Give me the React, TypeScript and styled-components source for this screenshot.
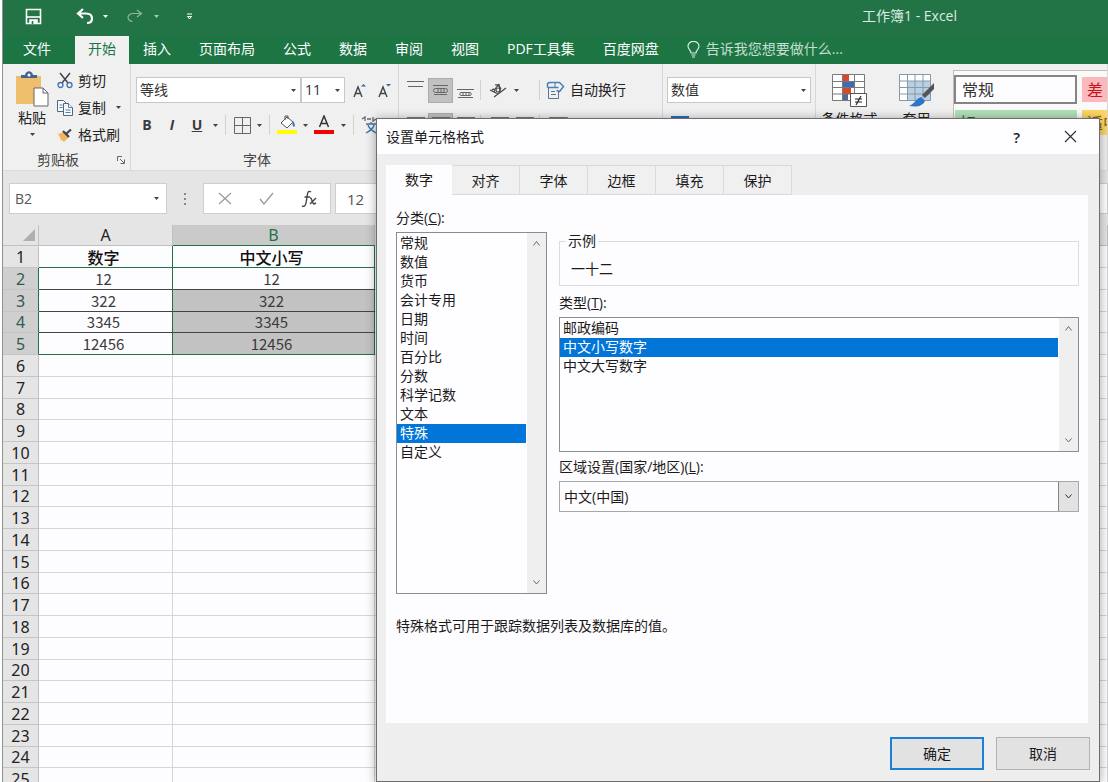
import React from "react";
import styled, { createGlobalStyle, css } from "styled-components";

const GlobalStyle = createGlobalStyle`
  * { box-sizing: border-box; }
  html, body { margin: 0; height: 100%; }
  body {
    overflow: hidden;
    background: #fff;
    font-family: "Open Sans", "Noto Sans CJK SC", sans-serif;
    font-size: 14px;
    line-height: 20px;
    color: #222;
  }
  button, input, select { font: inherit; color: inherit; margin: 0; padding: 0; border: 0; background: none; border-radius: 0; }
  svg { display: block; flex: none; }
`;

/* ---------- window frame ---------- */

const Desktop = styled.div`
  position: relative;
  height: 100vh;
  padding-left: 2px;
  overflow: hidden;
`;
const Workbook = styled.main`
  display: flex;
  flex-direction: column;
  height: 100%;
  border-left: 1px solid #8f9390;
  background: #e6e5e6;
  overflow: hidden;
`;
const TitleBar = styled.header`
  display: flex;
  flex: none;
  align-items: center;
  height: 36px;
  padding: 0 151px 4px 22px;
  background: #227346;
  color: #fff;
`;
const QuickButton = styled.button<{ $gap?: number; $dim?: boolean }>`
  margin-right: ${(p) => p.$gap ?? 0}px;
  opacity: ${(p) => (p.$dim ? 0.6 : 1)};
`;
const DocTitle = styled.h1`
  margin: 0 0 0 auto;
  font-size: 14px;
  line-height: 20px;
  font-weight: 400;
  color: #dcebe2;
`;
const TabBar = styled.nav`
  display: flex;
  flex: none;
  height: 28px;
  background: #1d7544;
  color: #fff;
`;
const RibbonTab = styled.button<{ $active?: boolean; $file?: boolean }>`
  flex: none;
  padding: ${(p) => (p.$file ? "0 24px 2px 20px" : p.$active ? "0 13px 2px" : "0 14px 2px")};
  ${(p) =>
    p.$active &&
    css`
      background: #f2f1f2;
      color: #1d7544;
    `}
`;
const TellMe = styled.label`
  display: flex;
  align-items: center;
  gap: 6px;
  margin-left: 14px;
  padding-bottom: 2px;
  input { width: 160px; }
  input::placeholder { color: #c5dfd0; opacity: 1; }
`;

/* ---------- ribbon ---------- */

const Ribbon = styled.section`
  display: flex;
  flex: none;
  height: 107px;
  background: #f1f0f1;
  border-bottom: 1px solid #dbdadb;
  overflow: hidden;
`;
const Group = styled.div<{ $width?: number; $pad?: string }>`
  display: flex;
  flex-direction: column;
  flex: ${(p) => (p.$width ? "none" : "1")};
  width: ${(p) => (p.$width ? `${p.$width}px` : "auto")};
  padding: ${(p) => p.$pad ?? "13px 0 0 5px"};
  border-right: 1px solid #d8d7d8;
  overflow: hidden;
`;
const GroupName = styled.div`
  display: flex;
  justify-content: center;
  margin-top: auto;
  height: 20px;
  padding-right: 20px;
  color: #444;
`;
const LauncherName = styled(GroupName)`
  justify-content: space-between;
  align-items: center;
  padding: 0 5px 0 34px;
`;
const Line = styled.div<{ $height?: number; $top?: number }>`
  display: flex;
  align-items: center;
  flex: none;
  height: ${(p) => p.$height ?? 26}px;
  margin-top: ${(p) => p.$top ?? 0}px;
`;
const Clipboard = styled.div`
  display: flex;
  gap: 8px;
  padding-left: 12px;
`;
const PasteButton = styled.button`
  display: flex;
  flex-direction: column;
  align-items: center;
  flex: none;
  width: 34px;
  margin-top: 7px;
  > span { margin-bottom: 5px; }
`;
const CommandList = styled.div`
  display: flex;
  flex-direction: column;
  padding-top: 3px;
`;
const Command = styled.button<{ $tail?: boolean }>`
  display: flex;
  align-items: center;
  gap: 5px;
  height: 27px;
  white-space: nowrap;
  svg + svg, span + svg { margin-left: 5px; }
`;
const Tool = styled.button<{ $width?: number; $on?: boolean; $letter?: "b" | "i" | "u" }>`
  display: flex;
  align-items: center;
  justify-content: center;
  flex: none;
  width: ${(p) => p.$width ?? 25}px;
  height: 25px;
  background: ${(p) => (p.$on ? "#c2c1c2" : "none")};
  border: ${(p) => (p.$on ? "1px solid #adacad" : "0")};
  color: #3c3b3c;
  font-weight: ${(p) => (p.$letter ? 700 : 400)};
  font-style: ${(p) => (p.$letter === "i" ? "italic" : "normal")};
  text-decoration: ${(p) => (p.$letter === "u" ? "underline" : "none")};
`;
const Rule = styled.span<{ $left?: number; $right?: number }>`
  width: 1px;
  height: 20px;
  margin: 0 ${(p) => p.$right ?? 4}px 0 ${(p) => p.$left ?? 4}px;
  background: #d3d2d3;
`;
const ComboFrame = styled.span<{ $width: number }>`
  display: grid;
  align-items: center;
  flex: none;
  width: ${(p) => p.$width}px;
  height: 26px;
  border: 1px solid #c9c8c9;
  background: #fff;
  > * { grid-area: 1 / 1; }
  > select { appearance: none; width: 100%; height: 24px; padding-left: 3px; outline: 0; color: #333; }
  > svg { justify-self: end; margin-right: 4px; pointer-events: none; }
`;
const BigCommand = styled.button`
  display: flex;
  flex-direction: column;
  align-items: center;
  width: 67px;
  line-height: 20px;
`;
const StyleRow = styled.div`
  display: flex;
  align-items: flex-start;
`;
const Gallery = styled.div`
  display: grid;
  grid-template-columns: 123px 1fr;
  gap: 4px;
  flex: 1;
  margin-left: 3px;
  padding-top: 4px;
  background: #fbfafb;
  border: 1px solid #c9b9b9;
  border-width: 1px 0 0 1px;
`;
const Swatch = styled.button<{ $bg: string; $ink: string; $framed?: boolean }>`
  height: ${(p) => (p.$framed ? 29 : 25)}px;
  margin: ${(p) => (p.$framed ? "0" : "2px 0 0 1px")};
  padding-left: ${(p) => (p.$framed ? 6 : 5)}px;
  text-align: left;
  font-size: 16px;
  white-space: nowrap;
  overflow: hidden;
  background: ${(p) => p.$bg};
  color: ${(p) => p.$ink};
  border: ${(p) => (p.$framed ? "2px solid #858485" : "0")};
`;

/* ---------- formula bar ---------- */

const FormulaBar = styled.section`
  display: flex;
  flex: none;
  align-items: center;
  height: 54px;
  padding: 1px 0 0 6px;
  color: #555;
`;
const NameBox = styled.label`
  display: flex;
  align-items: center;
  width: 158px;
  height: 31px;
  padding: 0 7px 0 5px;
  border: 1px solid #cfcecf;
  background: #fff;
  input { flex: 1; min-width: 0; }
`;
const FormulaTools = styled.div`
  display: flex;
  align-items: center;
  justify-content: space-around;
  width: 128px;
  height: 31px;
  margin-right: 4px;
  border: 1px solid #cfcecf;
  background: #fff;
`;
const FormulaInput = styled.input`
  && {
    flex: 1;
    height: 31px;
    padding-left: 11px;
    border: 1px solid #cfcecf;
    background: #fff;
    font-size: 15px;
  }
`;
const Dots = styled.span`
  width: 36px;
  display: flex;
  justify-content: center;
`;

/* ---------- sheet ---------- */

const Sheet = styled.table`
  flex: none;
  width: 100%;
  table-layout: fixed;
  border-collapse: separate;
  border-spacing: 0;
  background: #fdfcfe;
  th, td { padding: 0; overflow: hidden; }
`;
const HeadCell = styled.th<{ $width?: number; $active?: boolean }>`
  width: ${(p) => (p.$width ? `${p.$width}px` : "auto")};
  height: 21px;
  font: 400 16px/20px "Noto Sans", sans-serif;
  background: ${(p) => (p.$active ? "#cbcacb" : "#e6e5e6")};
  color: ${(p) => (p.$active ? "#217346" : "#222")};
  border-right: 1px solid #c2c1c2;
  border-bottom: 1px solid ${(p) => (p.$active ? "#217346" : "#c2c1c2")};
  svg { margin: 0 3px 0 auto; }
`;
const SheetRow = styled.tr`
  height: 22px;
  &:nth-child(4n) { height: 21px; }
`;
const RowHead = styled.th<{ $picked?: boolean }>`
  font: 400 16px/20px "Noto Sans", sans-serif;
  background: ${(p) => (p.$picked ? "#d0cfd0" : "#e6e5e6")};
  color: ${(p) => (p.$picked ? "#2f5a4c" : "#222")};
  border-right: 1px solid ${(p) => (p.$picked ? "#217346" : "#c2c1c2")};
  border-bottom: 1px solid #c6c5c6;
`;
const Cell = styled.td<{ $right?: string; $bottom?: string; $shade?: boolean; $bold?: boolean }>`
  height: 21px;
  padding-right: 4px !important;
  text-align: center;
  font: ${(p) => (p.$bold ? "500 16px/20px" : "400 15px/20px")} "Noto Sans CJK SC", sans-serif;
  color: ${(p) => (p.$bold ? "#111" : "#3c3b3c")};
  background: ${(p) => (p.$shade ? "#c3c2c3" : "transparent")};
  border-right: 1px solid ${(p) => p.$right ?? "#d4d6d8"};
  border-bottom: 1px solid ${(p) => p.$bottom ?? "#d4d6d8"};
`;

/* ---------- dialog ---------- */

const Dialog = styled.section`
  position: absolute;
  top: 118px;
  right: 8px;
  bottom: 0;
  left: 376px;
  display: flex;
  flex-direction: column;
  background: #efeeef;
  border: 1px solid #6f6e6f;
  box-shadow: 0 1px 10px rgba(0, 0, 0, 0.35);
  color: #1b1b1b;
`;
const DialogHead = styled.header`
  display: flex;
  align-items: center;
  height: 35px;
  padding: 0 22px 0 9px;
  background: #fefdff;
  h2 { flex: 1; margin: 0; font-size: 14px; line-height: 20px; font-weight: 400; }
  button { font-size: 15px; font-weight: 600; }
  button + button { margin-left: 44px; }
`;
const DialogTabs = styled.div`
  display: flex;
  height: 30px;
  margin: 11px 0 0 9px;
`;
const DialogTab = styled.button<{ $active?: boolean }>`
  width: ${(p) => (p.$active ? 66 : 68)}px;
  ${(p) =>
    p.$active
      ? css`
          background: #fdfcfe;
        `
      : css`
          border: 1px solid #dad9da;
          border-left: 0;
          background: #f1f0f1;
          padding-top: 2px;
        `}
`;
const Panel = styled.div`
  flex: 1;
  min-height: 0;
  margin: 0 11px 0 9px;
  padding: 13px 9px 0 10px;
  background: #fdfcfe;
`;
const Columns = styled.div`
  display: grid;
  grid-template-columns: 151px 1fr;
  column-gap: 12px;
`;
const Column = styled.div`
  display: flex;
  flex-direction: column;
`;
const FieldName = styled.label<{ $top?: number; $bottom?: number }>`
  display: block;
  margin: ${(p) => p.$top ?? 0}px 0 ${(p) => p.$bottom ?? 4}px;
`;
const ListFrame = styled.div<{ $height: number }>`
  display: flex;
  height: ${(p) => p.$height}px;
  border: 1px solid #8a8c90;
  background: #fefdff;
`;
const Options = styled.ul`
  flex: 1;
  margin: 0;
  padding: 1px 1px 0 0;
  list-style: none;
`;
const Option = styled.li<{ $on?: boolean }>`
  height: 19px;
  padding-left: 3px;
  line-height: 18px;
  background: ${(p) => (p.$on ? "#0275d8" : "none")};
  color: ${(p) => (p.$on ? "#fff" : "inherit")};
`;
const ScrollTrack = styled.div`
  display: flex;
  flex-direction: column;
  justify-content: space-between;
  align-items: center;
  width: 19px;
  padding: 7px 0;
  background: #f0eff0;
`;
const Sample = styled.fieldset`
  height: 54px;
  margin: 24px 0 0;
  padding: 9px 11px 0;
  border: 1px solid #dddcdd;
  legend { margin-left: -5px; padding: 0 2px; line-height: 18px; }
`;
const LocaleFrame = styled.div`
  display: grid;
  height: 31px;
  border: 1px solid #a9a8a9;
  > * { grid-area: 1 / 1; }
  select { appearance: none; width: 100%; padding-left: 4px; }
`;
const DropArrow = styled.span`
  display: flex;
  align-items: center;
  justify-content: center;
  justify-self: end;
  width: 20px;
  border-left: 1px solid #858485;
  background: #e3e2e3;
  pointer-events: none;
`;
const Hint = styled.p`
  margin: 22px 0 0;
`;
const Actions = styled.footer`
  display: flex;
  justify-content: flex-end;
  gap: 12px;
  padding: 14px 9px 11px;
`;
const ActionButton = styled.button<{ $primary?: boolean }>`
  width: 94px;
  height: 33px;
  background: #e3e2e3;
  border: ${(p) => (p.$primary ? "2px solid #1e7fd6" : "1px solid #b3b2b3")};
`;

/* ---------- icons ---------- */

const Caret = ({ color = "#444" }: { color?: string }) => (
  <svg width="5" height="3" viewBox="0 0 5 3" fill={color}><path d="M0 0h5L2.500 3z" /></svg>
);
const Chevron = ({ up, color = "#6a696a" }: { up?: boolean; color?: string }) => (
  <svg width="9" height="7" viewBox="0 0 9 7" fill="none" stroke={color}>
    <path d={up ? "M1.500 5.500l3-4 3 4" : "M1.500 1.500l3 3.500 3-3.500"} />
  </svg>
);
const SaveIcon = () => (
  <svg width="17" height="17" viewBox="0 0 17 17" fill="none" stroke="#fff" strokeWidth="1.600">
    <path d="M1.500 1.500h14v14h-14z" /><path d="M2 9h13" /><path d="M5 16v-4h7v4" fill="#fff" /><path d="M7.500 13v3" stroke="#227346" />
  </svg>
);
const UndoIcon = () => (
  <svg width="18" height="17" viewBox="0 0 18 17" fill="none" stroke="#fff" strokeWidth="2.200">
    <path d="M7 1L2 5.500 7 10M2 5.500h8c4 0 6 2 6 5s-2 4.500-5 4.500" />
  </svg>
);
const RedoIcon = () => (
  <svg width="16" height="14" viewBox="0 0 16 14" fill="none" stroke="#d5e6dc" strokeWidth="1.200">
    <path d="M10 1l4.500 3.500L10 8M14 4.500H6c-3 0-5 2-5 4s2 4 4.500 4" />
  </svg>
);
const CustomizeIcon = () => (
  <svg width="5" height="7" viewBox="0 0 5 7" fill="none" stroke="#fff"><path d="M0 1h5M.5 3.500h4l-2 2.500z" /></svg>
);
const BulbIcon = () => (
  <svg width="13" height="17" viewBox="0 0 13 17" fill="none" stroke="#dcebe2" strokeWidth="1.200">
    <path d="M4 12c0-3-3-3.500-3-7a5.300 4.500 0 0 1 11 0c0 3.500-3 4-3 7zM4.500 14h4M5 16h3" />
  </svg>
);
const PasteIcon = () => (
  <svg width="34" height="37" viewBox="0 0 34 37">
    <path d="M1 5h25v28H1z" fill="#efbe6d" />
    <path d="M6 7V4h4c1-5 7-5 8 0h4v3z" fill="#41658f" /><circle cx="14" cy="4" r="1.500" fill="#fff" />
    <path d="M19 17h9l5 5v13H19z" fill="#fff" stroke="#686768" /><path d="M28 17v5h5" fill="none" stroke="#686768" />
  </svg>
);
const CutIcon = () => (
  <svg width="16" height="17" viewBox="0 0 16 17" fill="none">
    <path d="M3 1l8 10M13 1L5 11" stroke="#444" strokeWidth="1.500" />
    <circle cx="3.500" cy="13" r="2.500" stroke="#3f74ad" strokeWidth="1.300" /><circle cx="12.500" cy="13" r="2.500" stroke="#3f74ad" strokeWidth="1.300" />
  </svg>
);
const CopyIcon = () => (
  <svg width="16" height="17" viewBox="0 0 16 17" fill="#fbfafb" stroke="#56677c">
    <path d="M.5 1.500h6l3 3v8h-9z" /><path d="M6.500 4.500h5l4 4v8h-9z" /><path d="M11.500 4.500v4h4M2.500 6h3M2.500 8.500h3M8.500 11h5M8.500 13.500h5" stroke="#4a7fb8" />
  </svg>
);
const BrushIcon = () => (
  <svg width="16" height="14" viewBox="0 0 16 14">
    <path d="M1 6l6-2 5 5-5 5-2-2-1 .5-1-3z" fill="#efb75e" /><path d="M6 3l6 6" stroke="#444" strokeWidth="2.200" fill="none" /><path d="M9 6l5-4.500" stroke="#444" strokeWidth="2.200" />
  </svg>
);
const LauncherIcon = () => (
  <svg width="8" height="8" viewBox="0 0 8 8" fill="none" stroke="#666"><path d="M.5 5V.5H5M3 3l4 4M7.500 3.500v4h-4" /></svg>
);
const FontSizeIcon = ({ down }: { down?: boolean }) => (
  <svg width="13" height="15" viewBox="0 0 13 15" fill="none">
    <path d="M1 14L5 4l4 10M2.500 10.500h5" stroke="#444" strokeWidth="1.400" />
    <path d={down ? "M8 1h5l-2.500 2.500z" : "M8 3.500h5L10.500 1z"} fill="#3465a4" />
  </svg>
);
const BordersIcon = () => (
  <svg width="17" height="17" viewBox="0 0 17 17" fill="none" stroke="#666"><path d="M.5.5h16v16H.5zM8.500.5v16M.5 8.500h16" /></svg>
);
const FillIcon = () => (
  <svg width="20" height="20" viewBox="0 0 20 20" fill="none">
    <path d="M4 8l6-6 6 5-6 6z" fill="#fff" stroke="#555" /><path d="M8 5V1h3v3" stroke="#555" /><path d="M16 6c2 2 2.500 5 1 6-2-1-1-3-2-5z" fill="#3f74ad" />
    <path d="M0 15h20v4H0z" fill="#ffff00" />
  </svg>
);
const FontColorIcon = () => (
  <svg width="20" height="20" viewBox="0 0 20 20" fill="none">
    <path d="M5.500 12L10 1l4.500 11M7 8.500h6" stroke="#333" strokeWidth="1.500" /><path d="M0 15h20v4H0z" fill="#f40000" />
  </svg>
);
const AlignIcon = ({ kind }: { kind: "top" | "middle" | "bottom" }) => (
  <svg width="17" height="20" viewBox="0 0 17 20" fill="none" stroke="#666">
    {kind === "top" && <path d="M0 1.500h17M1 6.500h15" />}
    {kind === "middle" && <path d="M1 5.500h15M2 14.500h13M3.500 8.500h10a2 2 0 0 1 0 4h-10a2 2 0 0 1 0-4M6 9v3M9 9v3M12 9v3" />}
    {kind === "bottom" && <path d="M0 9.500h17M1 17.500h15M3.500 12.500h10a2 2 0 0 1 0 3h-10a2 2 0 0 1 0-3M6 13v3M9 13v3M12 13v3" />}
  </svg>
);
const OrientIcon = () => (
  <svg width="18" height="17" viewBox="0 0 18 17" fill="none" stroke="#444" strokeWidth="1.200">
    <path d="M5 15L17 6M1 8l8 4M3 8c2-2 4 0 2 2M6 7l4-5M10 2l1 7M6 3c3-1 5 2 6 4" /><circle cx="9" cy="8" r="2" />
  </svg>
);
const WrapIcon = () => (
  <svg width="19" height="19" viewBox="0 0 19 19" fill="none" stroke="#4a7fb8">
    <path d="M1.500 6.500v-4l2-1h10l4 4-4 5-3-1M1.500 6.500h11" strokeWidth="1.500" />
    <path d="M2.500 7v10.500h10V11M5 10.500h4M5 13.500h5M9 2v4" stroke="#5c7592" />
  </svg>
);
const MergeIcon = () => (
  <svg width="19" height="16" viewBox="0 0 19 16" fill="none" stroke="#777"><path d="M.5.500h18v15H.5zM.5 4.500h18M6.500.5v4M12.500.5v4" /></svg>
);
const IndentIcon = () => (
  <svg width="18" height="16" viewBox="0 0 18 16" fill="none" stroke="#777"><path d="M0 .5h18M0 5.500h6M9 5.500h9M9 9.500h9M0 13.500h18" /></svg>
);
const CurrencyIcon = () => (
  <svg width="18" height="16" viewBox="0 0 18 16"><path d="M0 0h18v11H0z" fill="#2f6fb7" /><circle cx="9" cy="6" r="3" fill="#fff" /></svg>
);
const ConditionalIcon = () => (
  <svg width="36" height="34" viewBox="0 0 36 34" fill="none">
    <path d="M.5.500h32v26H.5z" fill="#fff" /><path d="M11 1h6v6h-6zM11 14h8v6h-8z" fill="#d8492c" /><path d="M11 8h11v5H11z" fill="#3a6db4" /><path d="M11 20h5v6h-5z" fill="#56698c" />
    <path d="M.5.500h32v26H.5zM.5 7.500h32M.5 13.500h32M.5 20h32M10.500.5v26M22.500.5v26" stroke="#77797c" />
    <path d="M18.500 19.500h16v13h-16z" fill="#fff" stroke="#555" /><path d="M23 25h7M23 28h7M29 22l-5 9" stroke="#222" strokeWidth="1.200" />
  </svg>
);
const TableStyleIcon = () => (
  <svg width="36" height="34" viewBox="0 0 36 34" fill="none">
    <path d="M.5.500h31v26H.5z" fill="#fff" /><path d="M8 7h24v19H8z" fill="#b6d0e6" />
    <path d="M.5.500h31v26H.5zM.5 7h31M.5 13.500h31M.5 20h31M8.500.5v26M16 .5v26M24 .5v26" stroke="#8a98a6" />
    <path d="M35 9v6L26 24l-3-3z" fill="#565556" /><path d="M22 23l4 4c-3 6-9 6-16 5 6-2 6-7 12-9z" fill="#2e75c8" />
  </svg>
);
const CornerIcon = () => (
  <svg width="12" height="12" viewBox="0 0 12 12"><path d="M12 0v12H0z" fill="#b0afb0" /></svg>
);
const CloseIcon = () => (
  <svg width="13" height="13" viewBox="0 0 13 13" fill="none" stroke="#333" strokeWidth="1.200"><path d="M1 1l11 11M12 1L1 12" /></svg>
);
const CancelIcon = () => (
  <svg width="14" height="13" viewBox="0 0 14 13" fill="none" stroke="#999" strokeWidth="1.200"><path d="M1 1l12 11M13 1L1 12" /></svg>
);
const CheckIcon = () => (
  <svg width="15" height="13" viewBox="0 0 15 13" fill="none" stroke="#999" strokeWidth="1.300"><path d="M1 7l4 5L14 1" /></svg>
);
const FxIcon = () => (
  <svg width="16" height="18" viewBox="0 0 16 18" fill="none" stroke="#444" strokeWidth="1.400">
    <path d="M10 2C7 0 6.500 3 6 7l-1 6c-.5 3-2 4-4 3M3.500 7H9M9 8c2-1 2 6 4 6l2-1M15 8l-6 6" />
  </svg>
);
const PhoneticIcon = () => (
  <svg width="18" height="18" viewBox="0 0 18 18" fill="none" stroke="#3f74ad" strokeWidth="1.300">
    <path d="M1 3l3-2v4M6 3h4M12 1v4l3-2" stroke="#666" /><path d="M5 8h10M10 6v2M7 9c1 4 5 6 8 8M13 9c-1 4-4 6-8 8" />
  </svg>
);
const DotsIcon = () => (
  <svg width="2" height="12" viewBox="0 0 2 12" fill="#888"><path d="M0 0h2v2H0zM0 5h2v2H0zM0 10h2v2H0z" /></svg>
);

/* ---------- data ---------- */

const ribbonTabs = ["文件", "开始", "插入", "页面布局", "公式", "数据", "审阅", "视图", "PDF工具集", "百度网盘"];
const dialogTabs = ["数字", "对齐", "字体", "边框", "填充", "保护"];
const categories = ["常规", "数值", "货币", "会计专用", "日期", "时间", "百分比", "分数", "科学记数", "文本", "特殊", "自定义"];
const types = ["邮政编码", "中文小写数字", "中文大写数字"];
const values = ["数字", "12", "322", "3345", "12456"];
const rowNumbers = Array.from({ length: 25 }, (_, i) => i + 1);
const GREEN = "#217346";
const INK = "#444";

const Combo = ({ label, value, width }: { label: string; value: string; width: number }) => (
  <ComboFrame $width={width}>
    <select aria-label={label} defaultValue={value}><option>{value}</option></select>
    <Caret />
  </ComboFrame>
);

const ListBox = ({ items, selected, height, labelId }: { items: string[]; selected: string; height: number; labelId: string }) => (
  <ListFrame $height={height}>
    <Options role="listbox" aria-labelledby={labelId} tabIndex={0}>
      {items.map((item) => (
        <Option key={item} role="option" aria-selected={item === selected} $on={item === selected}>{item}</Option>
      ))}
    </Options>
    <ScrollTrack><Chevron up /><Chevron /></ScrollTrack>
  </ListFrame>
);

const RibbonArea = () => (
  <Ribbon>
    <Group $width={128} $pad="0">
      <Clipboard>
        <PasteButton><PasteIcon /><span>粘贴</span><Caret /></PasteButton>
        <CommandList>
          <Command><CutIcon /><span>剪切</span></Command>
          <Command><CopyIcon /><span>复制</span><Caret /></Command>
          <Command><BrushIcon /><span>格式刷</span></Command>
        </CommandList>
      </Clipboard>
      <LauncherName>剪贴板<LauncherIcon /></LauncherName>
    </Group>
    <Group $width={268}>
      <Line>
        <Combo label="字体" value="等线" width={165} />
        <Combo label="字号" value="11" width={44} />
        <Tool $width={28} aria-label="增大字号"><FontSizeIcon /></Tool>
        <Tool $width={22} aria-label="减小字号"><FontSizeIcon down /></Tool>
      </Line>
      <Line $top={9}>
        <Tool $width={22} $letter="b">B</Tool>
        <Tool $width={28} $letter="i">I</Tool>
        <Tool $width={22} $letter="u">U</Tool>
        <Tool $width={14} aria-label="下划线选项"><Caret /></Tool>
        <Rule $left={3} $right={6} />
        <Tool $width={20} aria-label="边框"><BordersIcon /></Tool>
        <Tool $width={14} aria-label="边框选项"><Caret /></Tool>
        <Rule $left={3} $right={6} />
        <Tool $width={22} aria-label="填充颜色"><FillIcon /></Tool>
        <Tool $width={14} aria-label="填充颜色选项"><Caret /></Tool>
        <Tool $width={24} aria-label="字体颜色"><FontColorIcon /></Tool>
        <Tool $width={14} aria-label="字体颜色选项"><Caret /></Tool>
        <Rule $left={3} $right={6} />
        <Tool $width={20} aria-label="拼音"><PhoneticIcon /></Tool>
      </Line>
      <GroupName>字体</GroupName>
    </Group>
    <Group $width={264} $pad="13px 0 0 4px">
      <Line>
        <Tool aria-label="顶端对齐"><AlignIcon kind="top" /></Tool>
        <Tool $on aria-label="垂直居中"><AlignIcon kind="middle" /></Tool>
        <Tool aria-label="底端对齐"><AlignIcon kind="bottom" /></Tool>
        <Rule $left={2} $right={6} />
        <Tool $width={22} aria-label="方向"><OrientIcon /></Tool>
        <Tool $width={14} aria-label="方向选项"><Caret /></Tool>
        <Rule $left={16} $right={6} />
        <Command><WrapIcon />自动换行</Command>
      </Line>
      <Line $top={9}>
        <Tool aria-label="左对齐"><IndentIcon /></Tool>
        <Tool $on aria-label="居中"><IndentIcon /></Tool>
        <Tool aria-label="右对齐"><IndentIcon /></Tool>
        <Rule $left={2} $right={6} />
        <Tool aria-label="减少缩进量"><IndentIcon /></Tool>
        <Tool aria-label="增加缩进量"><IndentIcon /></Tool>
        <Rule $left={2} $right={6} />
        <Tool aria-label="合并后居中"><MergeIcon /></Tool>
      </Line>
    </Group>
    <Group $width={153} $pad="13px 0 0 4px">
      <Line><Combo label="数字格式" value="数值" width={144} /></Line>
      <Line $top={8}><Tool aria-label="会计数字格式"><CurrencyIcon /></Tool></Line>
    </Group>
    <Group $pad="6px 0 0 0">
      <StyleRow>
        <BigCommand><Line $height={36} $top={3}><ConditionalIcon /></Line>条件格式</BigCommand>
        <BigCommand><Line $height={36} $top={3}><TableStyleIcon /></Line>套用</BigCommand>
        <Gallery>
          <Swatch $bg="#fdfcfe" $ink="#333" $framed>常规</Swatch>
          <Swatch $bg="#fbb9be" $ink="#c41420">差</Swatch>
          <Swatch $bg="#b4e0b8" $ink="#176b25">好</Swatch>
          <Swatch $bg="#fbd767" $ink="#8f6210">适中</Swatch>
        </Gallery>
      </StyleRow>
    </Group>
  </Ribbon>
);

const SheetArea = () => (
  <Sheet>
    <thead>
      <tr>
        <HeadCell $width={36} aria-label="全选"><CornerIcon /></HeadCell>
        <HeadCell $width={134}>A</HeadCell>
        <HeadCell $width={202} $active>B</HeadCell>
        <HeadCell aria-label="C" />
      </tr>
    </thead>
    <tbody>
      {rowNumbers.map((n) => {
        const filled = n <= 5;
        const picked = n >= 2 && n <= 5;
        const edge = n === 1 || n === 5 ? GREEN : INK;
        return (
          <SheetRow key={n}>
            <RowHead scope="row" $picked={picked}>{n}</RowHead>
            <Cell $bold={n === 1} $right={filled ? GREEN : undefined} $bottom={filled ? edge : undefined}>
              {values[n - 1]}
            </Cell>
            <Cell
              $bold={n === 1}
              $shade={n >= 3 && n <= 5}
              $right={filled ? GREEN : undefined}
              $bottom={filled ? edge : undefined}
            >
              {n === 1 ? "中文小写" : values[n - 1]}
            </Cell>
            <Cell />
          </SheetRow>
        );
      })}
    </tbody>
  </Sheet>
);

const FormatDialog = () => (
  <Dialog role="dialog" aria-labelledby="format-title">
    <DialogHead>
      <h2 id="format-title">设置单元格格式</h2>
      <button>?</button>
      <button aria-label="关闭"><CloseIcon /></button>
    </DialogHead>
    <DialogTabs role="tablist">
      {dialogTabs.map((name, i) => (
        <DialogTab key={name} role="tab" aria-selected={i === 0} $active={i === 0}>{name}</DialogTab>
      ))}
    </DialogTabs>
    <Panel>
      <Columns>
        <Column>
          <FieldName as="div" id="category-label">分类(<u>C</u>):</FieldName>
          <ListBox items={categories} selected="特殊" height={362} labelId="category-label" />
        </Column>
        <Column>
          <Sample><legend>示例</legend>一十二</Sample>
          <FieldName as="div" id="type-label" $top={7}>类型(<u>T</u>):</FieldName>
          <ListBox items={types} selected="中文小写数字" height={135} labelId="type-label" />
          <FieldName htmlFor="locale" $top={5}>区域设置(国家/地区)(<u>L</u>):</FieldName>
          <LocaleFrame>
            <select id="locale" defaultValue="中文(中国)"><option>中文(中国)</option></select>
            <DropArrow><Chevron color="#333" /></DropArrow>
          </LocaleFrame>
        </Column>
      </Columns>
      <Hint>特殊格式可用于跟踪数据列表及数据库的值。</Hint>
    </Panel>
    <Actions>
      <ActionButton $primary>确定</ActionButton>
      <ActionButton>取消</ActionButton>
    </Actions>
  </Dialog>
);

export default function App() {
  return (
    <>
      <GlobalStyle />
      <Desktop>
        <Workbook>
          <TitleBar>
            <QuickButton $gap={34} aria-label="保存"><SaveIcon /></QuickButton>
            <QuickButton $gap={9} aria-label="撤消"><UndoIcon /></QuickButton>
            <QuickButton $gap={19} aria-label="撤消选项"><Caret color="#fff" /></QuickButton>
            <QuickButton $gap={11} $dim aria-label="恢复"><RedoIcon /></QuickButton>
            <QuickButton $gap={28} $dim aria-label="恢复选项"><Caret color="#fff" /></QuickButton>
            <QuickButton aria-label="自定义快速访问工具栏"><CustomizeIcon /></QuickButton>
            <DocTitle>工作簿1 - Excel</DocTitle>
          </TitleBar>
          <TabBar>
            {ribbonTabs.map((name, i) => (
              <RibbonTab key={name} $file={i === 0} $active={i === 1}>{name}</RibbonTab>
            ))}
            <TellMe><BulbIcon /><input aria-label="搜索" placeholder="告诉我您想要做什么..." /></TellMe>
          </TabBar>
          <RibbonArea />
          <FormulaBar>
            <NameBox><input aria-label="名称框" defaultValue="B2" /><Caret /></NameBox>
            <Dots><DotsIcon /></Dots>
            <FormulaTools>
              <button aria-label="取消输入"><CancelIcon /></button>
              <button aria-label="输入"><CheckIcon /></button>
              <button aria-label="插入函数"><FxIcon /></button>
            </FormulaTools>
            <FormulaInput aria-label="编辑栏" defaultValue="12" />
          </FormulaBar>
          <SheetArea />
        </Workbook>
        <FormatDialog />
      </Desktop>
    </>
  );
}
